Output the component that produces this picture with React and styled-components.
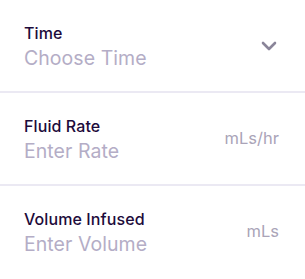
import styled, { createGlobalStyle } from 'styled-components';

const GlobalStyle = createGlobalStyle`
  body {
    margin: 0;
    background: #ffffff;
    font-family: 'Inter', 'Noto Sans', sans-serif;
  }
`;

const Form = styled.div`
  width: 305px;
  background: #ffffff;
`;

const Row = styled.div`
  display: flex;
  align-items: center;
  justify-content: space-between;
  height: 91px;
  padding: 0 26px 0 24px;
  border-bottom: ${(p) => (p.last ? 'none' : '2px solid #ebe9f3')};
  box-sizing: content-box;
`;

const Field = styled.div`
  display: flex;
  flex-direction: column;
  margin-top: 4px;
`;

const Label = styled.span`
  font-size: 16px;
  line-height: 21px;
  font-weight: 500;
  color: #1d0b3b;
  letter-spacing: 0.1px;
`;

const Placeholder = styled.span`
  font-size: 19.5px;
  line-height: 29px;
  color: #b4adc6;
  letter-spacing: 0.05px;
`;

const Unit = styled.span`
  font-size: 16.5px;
  color: #aaa4b8;
  margin-top: -2px;
`;

const Chevron = styled.svg`
  width: 16px;
  height: 10px;
  margin-right: 2px;
`;

const fields = [
  { label: 'Time', placeholder: 'Choose Time', chevron: true },
  { label: 'Fluid Rate', placeholder: 'Enter Rate', unit: 'mLs/hr' },
  { label: 'Volume Infused', placeholder: 'Enter Volume', unit: 'mLs' },
];

export default function App() {
  return (
    <>
      <GlobalStyle />
      <Form>
        {fields.map((f, i) => (
          <Row key={f.label} last={i === fields.length - 1}>
            <Field>
              <Label>{f.label}</Label>
              <Placeholder>{f.placeholder}</Placeholder>
            </Field>
            {f.chevron ? (
              <Chevron viewBox="0 0 16 10">
                <path
                  d="M2 2 L8 8 L14 2"
                  fill="none"
                  stroke="#8a8599"
                  strokeWidth="2.6"
                  strokeLinecap="round"
                  strokeLinejoin="round"
                />
              </Chevron>
            ) : (
              <Unit>{f.unit}</Unit>
            )}
          </Row>
        ))}
      </Form>
    </>
  );
}
